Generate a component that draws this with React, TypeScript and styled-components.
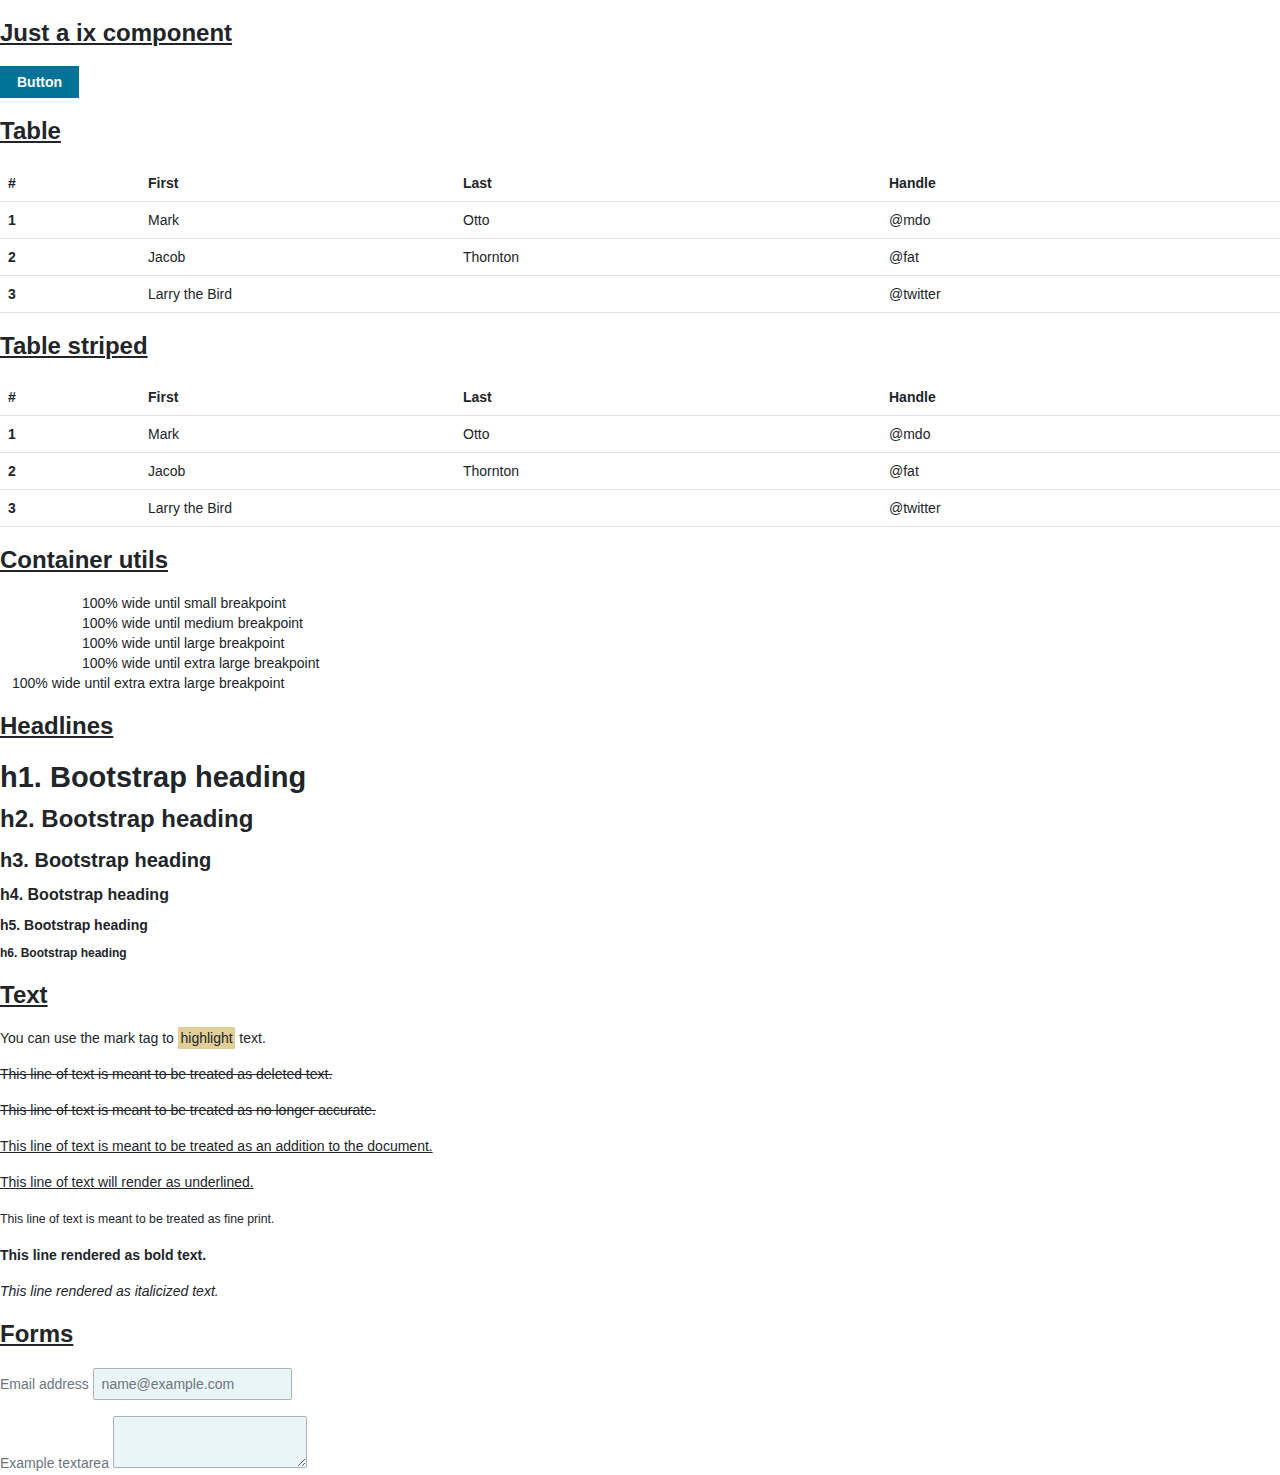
import styled, { createGlobalStyle } from "styled-components";

const GlobalStyle = createGlobalStyle`
  body {
    margin: 0;
    font-family: "Liberation Sans", Arial, sans-serif;
    font-size: 14px;
    line-height: 20px;
    color: #212529;
    background: #ffffff;
  }
  * {
    box-sizing: border-box;
  }
`;

type TRow = {
  id: number;
  first: string;
  last: string;
  handle: string;
};

const rows: TRow[] = [
  { id: 1, first: "Mark", last: "Otto", handle: "@mdo" },
  { id: 2, first: "Jacob", last: "Thornton", handle: "@fat" },
  { id: 3, first: "Larry the Bird", last: "", handle: "@twitter" },
];

const containers = [
  { label: "100% wide until small breakpoint", indent: 82 },
  { label: "100% wide until medium breakpoint", indent: 82 },
  { label: "100% wide until large breakpoint", indent: 82 },
  { label: "100% wide until extra large breakpoint", indent: 82 },
  { label: "100% wide until extra extra large breakpoint", indent: 12 },
];

const headings = [
  { tag: "h1", size: 29, top: 21, gap: 10 },
  { tag: "h2", size: 24, top: 0, gap: 14 },
  { tag: "h3", size: 20, top: 0, gap: 13 },
  { tag: "h4", size: 16, top: 0, gap: 13 },
  { tag: "h5", size: 14, top: 0, gap: 12 },
  { tag: "h6", size: 12, top: 0, gap: 21 },
] as const;

const DataTable = ({ offset = 0 }: { offset?: number }) => (
  <TableWrap $offset={offset}>
    <Table>
      <thead>
        <tr>
          <Th $width={140}>#</Th>
          <Th $width={315}>First</Th>
          <Th $width={426}>Last</Th>
          <Th>Handle</Th>
        </tr>
      </thead>
      <tbody>
        {rows.map((row) => (
          <tr key={row.id}>
            <Th>{row.id}</Th>
            <Td>{row.first}</Td>
            <Td>{row.last}</Td>
            <Td>{row.handle}</Td>
          </tr>
        ))}
      </tbody>
    </Table>
  </TableWrap>
);

const App = () => {
  return (
    <Page>
      <GlobalStyle />
      <SectionTitle>Just a ix component</SectionTitle>
      <Button type="button">Button</Button>

      <SectionTitle>Table</SectionTitle>
      <DataTable offset={1} />

      <SectionTitle>Table striped</SectionTitle>
      <DataTable />

      <SectionTitle>Container utils</SectionTitle>
      <div>
        {containers.map((c) => (
          <ContainerLine key={c.label} $indent={c.indent}>
            {c.label}
          </ContainerLine>
        ))}
      </div>

      <SectionTitle>Headlines</SectionTitle>
      {headings.map((h) => (
        <Heading key={h.tag} as={h.tag} $size={h.size} $top={h.top} $gap={h.gap}>
          {h.tag}. Bootstrap heading
        </Heading>
      ))}

      <SectionTitle>Text</SectionTitle>
      <Paragraph>
        You can use the mark tag to <Mark>highlight</Mark> text.
      </Paragraph>
      <Paragraph>
        <del>This line of text is meant to be treated as deleted text.</del>
      </Paragraph>
      <Paragraph>
        <s>This line of text is meant to be treated as no longer accurate.</s>
      </Paragraph>
      <Paragraph>
        <Ins>This line of text is meant to be treated as an addition to the document.</Ins>
      </Paragraph>
      <Paragraph>
        <u>This line of text will render as underlined.</u>
      </Paragraph>
      <Paragraph>
        <Small>This line of text is meant to be treated as fine print.</Small>
      </Paragraph>
      <Paragraph>
        <strong>This line rendered as bold text.</strong>
      </Paragraph>
      <Paragraph>
        <em>This line rendered as italicized text.</em>
      </Paragraph>

      <SectionTitle>Forms</SectionTitle>
      <Form>
        <FormGroup>
          <Label htmlFor="email">Email address</Label>{" "}
          <Input id="email" type="email" placeholder="name@example.com" />
        </FormGroup>
        <FormGroup>
          <Label htmlFor="textarea">Example textarea</Label>{" "}
          <TextArea id="textarea" />
        </FormGroup>
      </Form>
    </Page>
  );
};
export default App;

const Page = styled.div`
  width: 1280px;
  padding-bottom: 4px;
`;

const SectionTitle = styled.h2`
  font-size: 24px;
  font-weight: 700;
  line-height: 27px;
  margin: 19px 0 20px;
  text-decoration: underline;
  text-decoration-thickness: 2px;
  text-underline-offset: 2px;
`;

const Button = styled.button`
  display: block;
  height: 32px;
  padding: 0 17px;
  border: none;
  border-radius: 0;
  background-color: #007396;
  color: #ffffff;
  font-family: "Liberation Sans", Arial, sans-serif;
  font-size: 14px;
  font-weight: 700;
  line-height: 20px;
  cursor: pointer;
`;

const TableWrap = styled.div<{ $offset: number }>`
  padding-top: ${({ $offset }) => $offset}px;
`;

const Table = styled.table`
  width: 100%;
  border-collapse: collapse;
  border-spacing: 0;
`;

const Th = styled.th<{ $width?: number }>`
  width: ${({ $width }) => ($width ? `${$width}px` : "auto")};
  padding: 8px;
  text-align: left;
  font-weight: 700;
  line-height: 20px;
  border-bottom: 1px solid #dee2e6;
`;

const Td = styled.td`
  padding: 8px;
  text-align: left;
  line-height: 20px;
  border-bottom: 1px solid #dee2e6;
`;

const ContainerLine = styled.div<{ $indent: number }>`
  padding-left: ${({ $indent }) => $indent}px;
  line-height: 20px;
`;

const Heading = styled.h1<{ $size: number; $top: number; $gap: number }>`
  margin: ${({ $top }) => $top}px 0 ${({ $gap }) => $gap}px;
  font-size: ${({ $size }) => $size}px;
  font-weight: 700;
  line-height: 1.2;
`;

const Paragraph = styled.p`
  margin: 0 0 16px;
  line-height: 20px;
`;

const Mark = styled.mark`
  padding: 0.2em;
  background-color: #e2cf98;
  color: #212529;
`;

const Ins = styled.ins`
  text-decoration: underline;
`;

const Small = styled.small`
  font-size: 0.875em;
`;

const Form = styled.form`
  padding-top: 1px;
`;

const FormGroup = styled.div`
  margin-bottom: 16px;
  line-height: 20px;
`;

const Label = styled.label`
  color: #6c757d;
`;

const fieldBase = `
  border: 1px solid #a8b3b9;
  border-radius: 2px;
  background-color: #eaf5f8;
  font-family: "Liberation Sans", Arial, sans-serif;
  font-size: 14px;
  color: #495057;
`;

const Input = styled.input`
  ${fieldBase}
  width: 199px;
  height: 32px;
  padding: 5px 8px;
  line-height: 20px;

  &::placeholder {
    color: #6c757d;
  }
`;

const TextArea = styled.textarea`
  ${fieldBase}
  width: 194px;
  height: 52px;
  padding: 5px 8px;
  vertical-align: baseline;
`;
